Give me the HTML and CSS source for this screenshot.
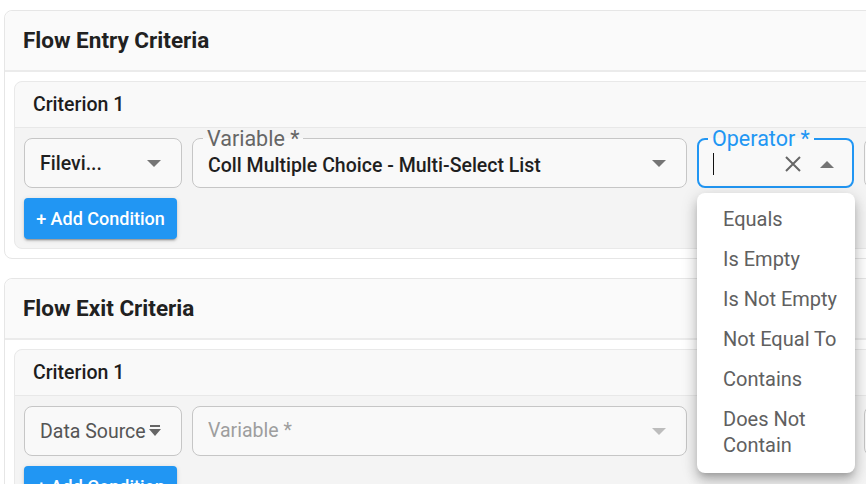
FILE: index.html
```html
<!DOCTYPE html>
<html>
<head>
<meta charset="utf-8">
<link rel="stylesheet" href="styles.css">
</head>
<body>
<div class="page">
  <section class="card card-top">
    <header class="card-head"><h2 class="card-title">Flow Entry Criteria</h2></header>
    <div class="card-body">
      <div class="crit">
        <div class="crit-head">Criterion 1</div>
        <div class="crit-body">
          <div class="row">
            <div class="field f-src">
              <span class="val val-strong ellipsis">Filevi...</span>
              <svg class="caret" width="14" height="7" viewBox="0 0 14 7"><path d="M0 0h14L7 7z"/></svg>
            </div>
            <fieldset class="field f-var">
              <legend class="lbl">Variable *</legend>
              <span class="val val-strong">Coll Multiple Choice - Multi-Select List</span>
              <svg class="caret" width="14" height="7" viewBox="0 0 14 7"><path d="M0 0h14L7 7z"/></svg>
            </fieldset>
            <div class="op-wrap">
              <fieldset class="field f-op focus">
                <legend class="lbl lbl-focus">Operator *</legend>
                <span class="cursor"></span>
                <svg class="clear" width="18" height="18" viewBox="0 0 18 18"><path d="M2 2L16 16M16 2L2 16"/></svg>
                <svg class="caret" width="14" height="7" viewBox="0 0 14 7"><path d="M0 7h14L7 0z"/></svg>
              </fieldset>
              <ul class="menu">
                <li>Equals</li>
                <li>Is Empty</li>
                <li>Is Not Empty</li>
                <li>Not Equal To</li>
                <li>Contains</li>
                <li>Does Not Contain</li>
              </ul>
            </div>
            <div class="field f-more"></div>
          </div>
          <button class="add-btn">+ Add Condition</button>
        </div>
      </div>
    </div>
  </section>

  <section class="card">
    <header class="card-head"><h2 class="card-title">Flow Exit Criteria</h2></header>
    <div class="card-body">
      <div class="crit">
        <div class="crit-head">Criterion 1</div>
        <div class="crit-body">
          <div class="row">
            <div class="field f-src">
              <span class="val val-plain">Data Source</span>
              <svg class="sort" width="12" height="12" viewBox="0 0 12 12"><path d="M1 0h10v2H1z M0 4h12L6 11z"/></svg>
            </div>
            <div class="field f-var">
              <span class="val val-ph">Variable *</span>
              <svg class="caret caret-light" width="14" height="7" viewBox="0 0 14 7"><path d="M0 0h14L7 7z"/></svg>
            </div>
            <div class="field f-op f-empty"></div>
            <div class="field f-more"></div>
          </div>
          <button class="add-btn">+ Add Condition</button>
        </div>
      </div>
    </div>
  </section>
</div>
</body>
</html>
```
FILE: styles.css
```css
html, body {
  margin: 0;
  padding: 0;
  background: #ffffff;
  overflow: hidden;
}
body {
  font-family: Roboto, "Liberation Sans", sans-serif;
  color: #212121;
}
.page {
  width: 1100px;
  padding: 10px 0 0 4px;
  display: flex;
  flex-direction: column;
  gap: 19px;
}
.card {
  border: 1px solid #e6e6e6;
  border-radius: 8px;
  background: #ffffff;
  position: relative;
}
.card-top {
  z-index: 5;
}
.card-head {
  background: #fafafa;
  height: 59px;
  border-bottom: 2px solid #ebebeb;
  border-radius: 8px 8px 0 0;
  display: flex;
  align-items: center;
  padding-left: 18px;
}
.card-title {
  margin: 0 0 2px 0;
  font-size: 22.5px;
  font-weight: 700;
  color: #212121;
}
.card-body {
  padding: 9px 0 9px 9px;
}
.crit {
  border: 1px solid #e9e9e9;
  border-radius: 8px;
  background: #f4f4f4;
}
.crit-head {
  background: #f9f9f9;
  height: 45px;
  border-bottom: 1px solid #e8e8e8;
  border-radius: 8px 8px 0 0;
  display: flex;
  align-items: center;
  padding-left: 18px;
  font-size: 19.5px;
  font-weight: 500;
  color: #1d1d1d;
}
.crit-body {
  padding: 10px 9px 9px 9px;
  border-radius: 0 0 8px 8px;
}
.row {
  display: flex;
  gap: 10px;
  align-items: flex-start;
}
.field {
  box-sizing: border-box;
  height: 50px;
  border: 1px solid #c6c6c6;
  border-radius: 8px;
  background: #f9f9f9;
  display: flex;
  align-items: center;
  margin: 0;
  padding: 0 20px 0 15px;
  min-width: 0;
  flex: none;
}
fieldset.field {
  display: flex;
}
.lbl {
  line-height: 0;
  height: 0;
  padding: 0 4px;
  margin-left: -5px;
  font-size: 21.5px;
  color: #666666;
  font-weight: 400;
}
.lbl-focus {
  color: #2196f3;
}
.f-src { width: 158px; }
.f-var { width: 495px; }
.f-op { width: 157px; }
.f-more { width: 120px; }
.focus {
  border: 2px solid #2196f3;
  padding: 0 18px 0 14px;
}
.op-wrap {
  position: relative;
  flex: none;
}
.val {
  flex: 1;
  min-width: 0;
  white-space: nowrap;
  overflow: hidden;
}
.val-strong {
  font-size: 19.5px;
  font-weight: 500;
  color: #1f1f1f;
}
.val-plain {
  font-size: 19.5px;
  color: #555555;
  overflow: visible;
}
.val-ph {
  font-size: 19.5px;
  color: #9e9e9e;
  margin-top: -2px;
}
.f-var .val-strong { margin-top: 4px; }
.caret {
  fill: #757575;
  flex: none;
}
.caret-light { fill: #bdbdbd; }
.sort {
  fill: #666666;
  flex: none;
  margin-left: -12px;
  margin-top: 0;
}
.cursor {
  width: 1px;
  height: 22px;
  background: #111111;
  margin-top: 2px;
  flex: none;
}
.clear {
  stroke: #666666;
  stroke-width: 2;
  fill: none;
  flex: none;
  margin-left: auto;
  margin-right: 18px;
  margin-top: 2px;
}
.op-wrap .caret { margin-top: 2px; }
.menu {
  position: absolute;
  left: 0;
  top: 55px;
  width: 158px;
  margin: 0;
  padding: 6px 0 8px 0;
  list-style: none;
  background: #ffffff;
  border-radius: 8px;
  box-shadow: 0 5px 6px -3px rgba(0,0,0,0.2), 0 9px 12px 1px rgba(0,0,0,0.14), 0 3px 16px 2px rgba(0,0,0,0.12);
  z-index: 10;
}
.menu li {
  padding: 7px 10px 7px 26px;
  line-height: 26px;
  font-size: 20px;
  color: #606060;
}
.add-btn {
  display: block;
  margin-top: 10px;
  height: 41px;
  width: 153px;
  border: none;
  border-radius: 4px;
  background: #2196f3;
  color: #ffffff;
  font-family: Roboto, "Liberation Sans", sans-serif;
  font-size: 18px;
  font-weight: 500;
  padding: 0;
  box-shadow: 0 3px 1px -2px rgba(0,0,0,0.2), 0 2px 2px 0 rgba(0,0,0,0.14), 0 1px 5px 0 rgba(0,0,0,0.12);
}
```
